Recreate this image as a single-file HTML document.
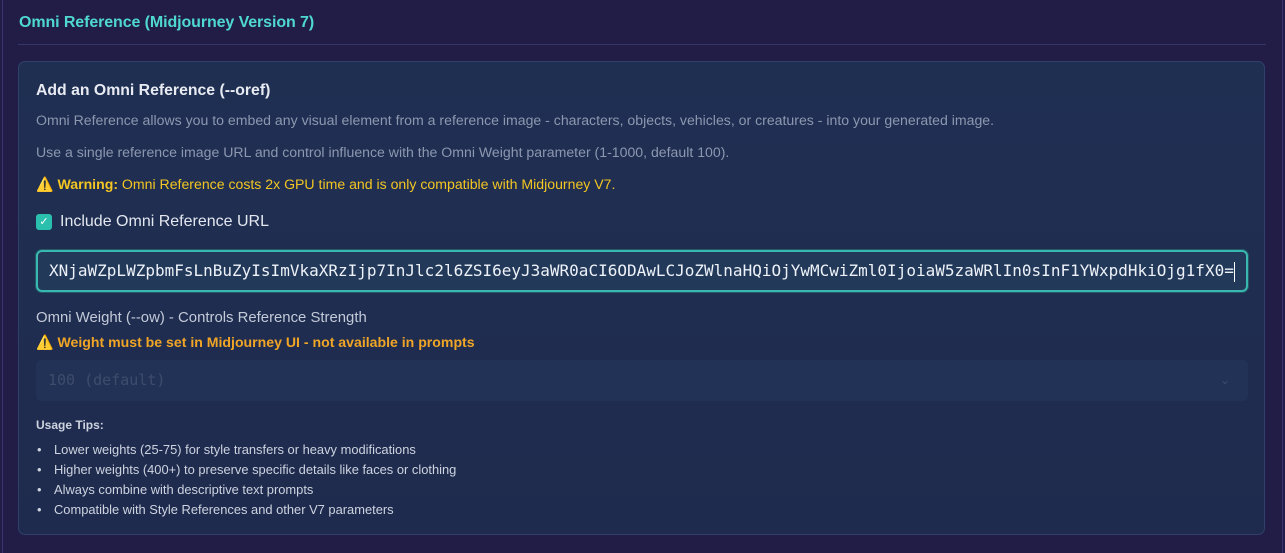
<!DOCTYPE html>
<html><head><meta charset="utf-8"><style>
*{box-sizing:border-box;margin:0;padding:0}
body{width:1285px;height:553px;background:#221d47;font-family:"Liberation Sans",sans-serif;overflow:hidden;position:relative}
.lb{position:absolute;left:2px;top:0;bottom:0;width:1px;background:#3b3470}
.rb{position:absolute;left:1282px;top:0;bottom:0;width:1px;background:#3b3470}
h2{position:absolute;left:19px;top:14px;font-size:16px;font-weight:bold;color:#4fd8d0;letter-spacing:-0.1px}
.hr{position:absolute;left:18px;top:44px;width:1248px;height:1px;background:#343766}
.card{position:absolute;left:18px;top:61px;width:1247px;height:474px;background:linear-gradient(180deg,#1f2f52,#1f2b4e);border:1px solid #2f416a;border-radius:7px}
.t{position:absolute;left:36px;white-space:nowrap}
h3{font-size:15.8px;font-weight:bold;color:#e8ebf2}
.p{font-size:14.1px;color:#8d98b0}
.w{font-size:14.1px;color:#f3c623}
.cb{position:absolute;left:36px;top:214px;width:16px;height:16px;background:#2bbfae;border-radius:3px;color:#fff;font-size:11px;text-align:center;line-height:16px}
.inp{position:absolute;left:36px;top:250px;width:1212px;height:42px;border:2px solid #38b8b0;border-radius:6px;background:#22395a;box-shadow:0 0 0 1px #245a66;font-family:"DejaVu Sans Mono",monospace;font-size:16px;color:#eef2f8;line-height:38px;padding-left:11px;white-space:nowrap;overflow:hidden}
.cur{display:inline-block;width:1px;height:20px;background:#fff;vertical-align:middle}
.sel{position:absolute;left:36px;top:360px;width:1212px;height:41px;border-radius:6px;background:#223256;font-family:"DejaVu Sans Mono",monospace;font-size:15px;color:#3e4c6c;line-height:41px;padding-left:12px}
.sel span{position:absolute;right:18px;top:0;color:#3e4c6c;font-family:"DejaVu Sans";font-size:12px}
ul{position:absolute;left:36px;top:442px;list-style:none;font-size:12.9px;color:#cdd3df}
li{height:20px;line-height:15px;white-space:nowrap}
li:before{content:"•";display:inline-block;width:17px;padding-left:1px}
</style></head><body>
<div class="lb"></div><div class="rb"></div>
<h2>Omni Reference (Midjourney Version 7)</h2>
<div class="hr"></div>
<div class="card"></div>
<h3 class="t" style="top:82px">Add an Omni Reference (--oref)</h3>
<div class="t p" style="top:112px">Omni Reference allows you to embed any visual element from a reference image - characters, objects, vehicles, or creatures - into your generated image.</div>
<div class="t p" style="top:144px">Use a single reference image URL and control influence with the Omni Weight parameter (1-1000, default 100).</div>
<div class="t w" style="top:176px">⚠️ <b>Warning:</b> Omni Reference costs 2x GPU time and is only compatible with Midjourney V7.</div>
<div class="cb">✓</div>
<div class="t" style="left:60px;top:213px;font-size:16px;color:#e3e7ef">Include Omni Reference URL</div>
<div class="inp">XNjaWZpLWZpbmFsLnBuZyIsImVkaXRzIjp7InJlc2l6ZSI6eyJ3aWR0aCI6ODAwLCJoZWlnaHQiOjYwMCwiZml0IjoiaW5zaWRlIn0sInF1YWxpdHkiOjg1fX0=<span class="cur"></span></div>
<div class="t" style="top:310px;font-size:14.9px;color:#c3cad8">Omni Weight (--ow) - Controls Reference Strength</div>
<div class="t" style="top:334px;font-size:14.1px;font-weight:bold;color:#f0a526">⚠️ Weight must be set in Midjourney UI - not available in prompts</div>
<div class="sel">100 (default)<span>⌄</span></div>
<div class="t" style="top:418px;font-size:12px;font-weight:bold;color:#cdd3df">Usage Tips:</div>
<ul>
<li>Lower weights (25-75) for style transfers or heavy modifications</li>
<li>Higher weights (400+) to preserve specific details like faces or clothing</li>
<li>Always combine with descriptive text prompts</li>
<li>Compatible with Style References and other V7 parameters</li>
</ul>
</body></html>
